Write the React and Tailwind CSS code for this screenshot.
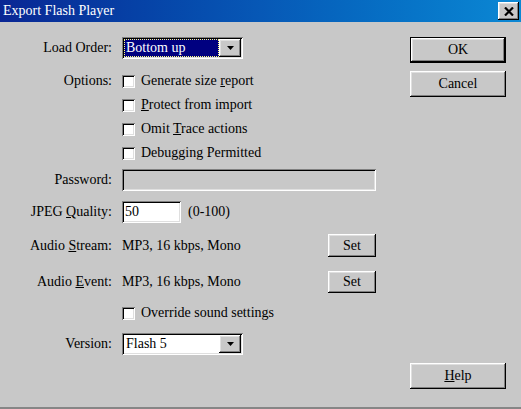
import React from "react";

const F = "font-['Liberation_Serif',serif] text-[14px] leading-none";

const raised =
  "shadow-[inset_-1px_-1px_#000000,inset_1px_1px_#ffffff,inset_-2px_-2px_#808080,inset_2px_2px_#dfdfdf]";
const sunken =
  "shadow-[inset_1px_1px_#808080,inset_-1px_-1px_#ffffff,inset_2px_2px_#000000,inset_-2px_-2px_#dfdfdf]";

function T({ children, className = "" }) {
  return <span className={F + " " + className}>{children}</span>;
}

function Btn({ children, def, className = "" }) {
  if (def) {
    return (
      <div className={"border border-black bg-[#c8c8c8] " + className}>
        <div className={"h-full w-full flex items-center justify-center " + raised}>
          <T>{children}</T>
        </div>
      </div>
    );
  }
  return (
    <div className={"bg-[#c8c8c8] flex items-center justify-center " + raised + " " + className}>
      <T>{children}</T>
    </div>
  );
}

function Check({ children }) {
  return (
    <div className="h-[24px] flex items-center">
      <div className={"w-[13px] h-[13px] bg-white shrink-0 " + sunken} />
      <T className="ml-[6px]">{children}</T>
    </div>
  );
}

function Arrow() {
  return (
    <div className={"w-[22px] h-[18px] bg-[#c8c8c8] flex items-center justify-center " + raised}>
      <svg width="7" height="4" viewBox="0 0 7 4">
        <path d="M0 0H7L3.5 4Z" fill="#000" />
      </svg>
    </div>
  );
}

function Label({ children }) {
  return (
    <div className="flex justify-end">
      <T>{children}</T>
    </div>
  );
}

export default function App() {
  return (
    <div className="w-[521px] h-[409px] bg-[#c8c8c8] flex flex-col text-black border-b-2 border-[#868686]">
      {/* Title bar */}
      <div className="h-[22px] shrink-0 bg-gradient-to-r from-[#0a2694] via-[#0758b6] to-[#0c88d4] flex items-center pl-[3px] pr-[2px]">
        <T className="text-white flex-1">Export Flash Player</T>
        <div className={"w-[21px] h-[18px] bg-[#c8c8c8] flex items-center justify-center " + raised}>
          <svg width="10" height="9" viewBox="0 0 10 9">
            <path d="M1 0.5L9 8.5M9 0.5L1 8.5" stroke="#000" strokeWidth="2.2" />
          </svg>
        </div>
      </div>

      {/* Body */}
      <div className="flex flex-1 pt-[15px]">
        {/* Left column */}
        <div className="w-[376px] flex flex-col">
          {/* Load Order */}
          <div className="grid grid-cols-[112px_1fr] gap-x-[10px] items-center h-[22px]">
            <Label>Load Order:</Label>
            <div className={"w-[121px] h-[22px] bg-white flex items-center p-[2px] " + sunken}>
              <div className="flex-1 h-[18px] bg-[#000080] flex items-center pl-[2px] outline outline-1 outline-dotted outline-[#ffff80] -outline-offset-1">
                <T className="text-white">Bottom up</T>
              </div>
              <Arrow />
            </div>
          </div>

          {/* Options */}
          <div className="grid grid-cols-[112px_1fr] gap-x-[10px] mt-[10px]">
            <div className="h-[24px] flex items-center justify-end">
              <T>Options:</T>
            </div>
            <div className="flex flex-col">
              <Check>
                Generate size <u>r</u>eport
              </Check>
              <Check>
                <u>P</u>rotect from import
              </Check>
              <Check>
                Omit <u>T</u>race actions
              </Check>
              <Check>Debugging Permitted</Check>
            </div>
          </div>

          {/* Password */}
          <div className="grid grid-cols-[112px_1fr] gap-x-[10px] items-center mt-[4px] h-[22px]">
            <Label>Password:</Label>
            <div className={"w-[254px] h-[22px] bg-[#c8c8c8] " + sunken} />
          </div>

          {/* JPEG */}
          <div className="grid grid-cols-[112px_1fr] gap-x-[10px] items-center mt-[10px] h-[22px]">
            <Label>
              JPEG <u>Q</u>uality:
            </Label>
            <div className="flex items-center">
              <div className={"w-[59px] h-[22px] bg-white flex items-center pl-[3px] " + sunken}>
                <T>50</T>
              </div>
              <T className="ml-[7px]">(0-100)</T>
            </div>
          </div>

          {/* Audio Stream */}
          <div className="grid grid-cols-[112px_1fr] gap-x-[10px] items-center mt-[11px] h-[23px]">
            <Label>
              Audio <u>S</u>tream:
            </Label>
            <div className="flex items-center justify-between w-[254px]">
              <T>MP3, 16 kbps, Mono</T>
              <Btn className="w-[48px] h-[23px]">Set</Btn>
            </div>
          </div>

          {/* Audio Event */}
          <div className="grid grid-cols-[112px_1fr] gap-x-[10px] items-center mt-[14px] h-[22px]">
            <Label>
              Audio <u>E</u>vent:
            </Label>
            <div className="flex items-center justify-between w-[254px]">
              <T>MP3, 16 kbps, Mono</T>
              <Btn className="w-[48px] h-[22px]">Set</Btn>
            </div>
          </div>

          {/* Override */}
          <div className="grid grid-cols-[112px_1fr] gap-x-[10px] mt-[8px]">
            <div />
            <Check>Override sound settings</Check>
          </div>

          {/* Version */}
          <div className="grid grid-cols-[112px_1fr] gap-x-[10px] items-center mt-[8px] h-[22px]">
            <Label>Version:</Label>
            <div className={"w-[121px] h-[22px] bg-white flex items-center p-[2px] " + sunken}>
              <div className="flex-1 h-[18px] flex items-center pl-[2px]">
                <T>Flash 5</T>
              </div>
              <Arrow />
            </div>
          </div>
        </div>

        {/* Right column */}
        <div className="ml-[34px] w-[96px] flex flex-col">
          <Btn def className="h-[26px]">OK</Btn>
          <Btn className="h-[26px] mt-[8px]">Cancel</Btn>
          <Btn className="h-[26px] mt-[266px]">
            <u>H</u>elp
          </Btn>
        </div>
      </div>
    </div>
  );
}
